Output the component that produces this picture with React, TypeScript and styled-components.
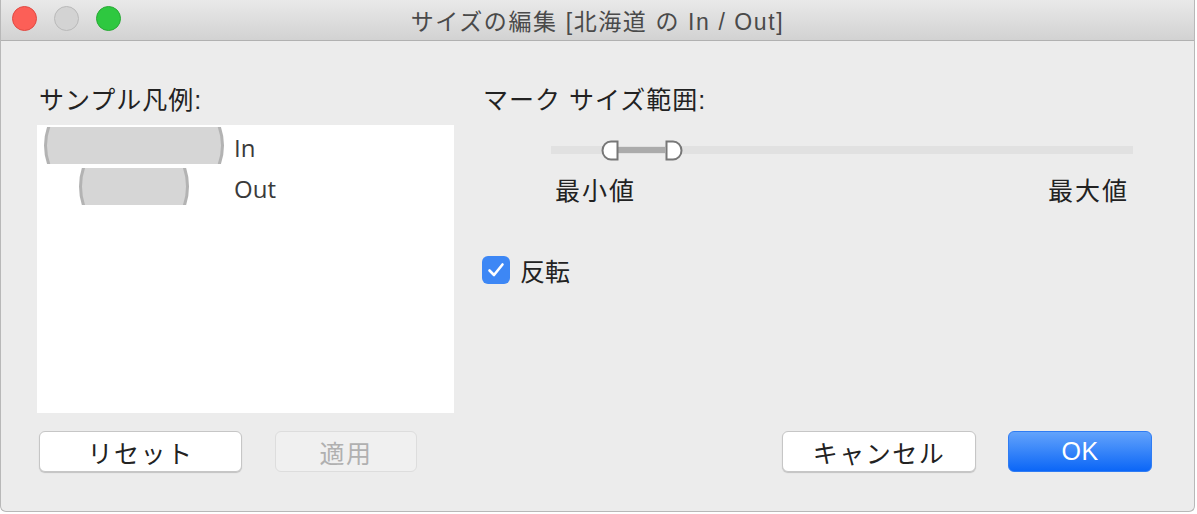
import React from "react";
import styled, { createGlobalStyle, css } from "styled-components";

const GlobalStyle = createGlobalStyle`
  html, body {
    margin: 0;
    padding: 0;
    background: #ffffff;
  }
  body {
    font-family: "Liberation Sans", "Noto Sans CJK JP", sans-serif;
    color: #222;
  }
`;

const Window = styled.div`
  width: 1195px;
  height: 512px;
  box-sizing: border-box;
  display: flex;
  flex-direction: column;
  background: #ececec;
  border: 1px solid #b8b8b8;
  border-top: none;
  border-radius: 0 0 6px 6px;
  overflow: hidden;
`;

const TitleBar = styled.div`
  position: relative;
  height: 40px;
  flex: none;
  display: flex;
  align-items: center;
  justify-content: center;
  background: linear-gradient(#e9e9e9, #d2d2d2);
  border-bottom: 1px solid #b1b1b1;
`;

const Lights = styled.div`
  position: absolute;
  left: 11px;
  top: 6px;
  display: flex;
  gap: 17px;
`;

const Light = styled.span<{ $fill: string; $edge: string }>`
  width: 25px;
  height: 25px;
  box-sizing: border-box;
  border-radius: 50%;
  background: ${(p) => p.$fill};
  border: 1px solid ${(p) => p.$edge};
`;

const Title = styled.div`
  font-size: 23px;
  color: #4a4a4a;
  letter-spacing: 1.6px;
  margin-left: 0;
`;

const Body = styled.div`
  flex: 1;
  display: flex;
  flex-direction: column;
  padding: 44px 0 0 36px;
`;

const Columns = styled.div`
  display: flex;
`;

const LeftColumn = styled.div`
  width: 417px;
  display: flex;
  flex-direction: column;
`;

const RightColumn = styled.div`
  margin-left: 27px;
  width: 652px;
  display: flex;
  flex-direction: column;
`;

const Label = styled.div`
  font-size: 25px;
  letter-spacing: 1px;
  line-height: 30px;
  height: 30px;
  padding-left: 2px;
  color: #222;
`;

const LegendBox = styled.div`
  margin-top: 10px;
  height: 288px;
  background: #ffffff;
  padding-top: 2px;
  box-sizing: border-box;
  display: flex;
  flex-direction: column;
  gap: 4px;
`;

const LegendRow = styled.div`
  display: flex;
  align-items: center;
  height: 37px;
  padding-left: 7px;
`;

const LegendText = styled.span`
  margin-left: 10px;
  font-family: "Open Sans", "Noto Sans", sans-serif;
  font-size: 24px;
  color: #3a3a3a;
  padding-top: 4px;
`;

const SliderArea = styled.div`
  margin: 23px 0 0 70px;
  width: 582px;
  display: flex;
  flex-direction: column;
`;

const Track = styled.div`
  position: relative;
  height: 24px;
  display: flex;
  align-items: center;
  &::before {
    content: "";
    flex: 1;
    height: 8px;
    background: #e1e1e1;
  }
`;

const Range = styled.div`
  position: absolute;
  left: 64px;
  width: 50px;
  top: 9px;
  height: 6px;
  background: #ababab;
`;

const Knob = styled.svg<{ $left: number }>`
  position: absolute;
  top: 2px;
  left: ${(p) => p.$left}px;
`;

const Ends = styled.div`
  margin-top: 14px;
  display: flex;
  justify-content: space-between;
  padding: 0 4px 0 4px;
  font-size: 25px;
  letter-spacing: 2px;
  line-height: 30px;
`;

const CheckRow = styled.label`
  margin-top: 46px;
  display: flex;
  align-items: center;
  gap: 10px;
  font-size: 25px;
  padding-left: 1px;
`;

const CheckBox = styled.span`
  width: 28px;
  height: 28px;
  border-radius: 6px;
  background: #3d87f5;
  display: flex;
  align-items: center;
  justify-content: center;
`;

const Footer = styled.div`
  margin-top: 18px;
  display: flex;
  align-items: center;
  padding-left: 2px;
`;

const Button = styled.button<{ $kind?: "default" | "primary" | "disabled"; $width: number }>`
  width: ${(p) => p.$width}px;
  height: 41px;
  border-radius: 6px;
  font-family: "Liberation Sans", "Noto Sans CJK JP", sans-serif;
  font-size: 25px;
  letter-spacing: 1.5px;
  padding: 0;
  display: flex;
  align-items: center;
  justify-content: center;
  ${(p) =>
    p.$kind === "primary"
      ? css`
          background: linear-gradient(#63a3fb, #0b66f7);
          border: 1px solid #2f7cf3;
          color: #fff;
          letter-spacing: 0.5px;
        `
      : p.$kind === "disabled"
      ? css`
          background: #f0f0f0;
          border: 1px solid #dddddd;
          color: #b0b0b0;
        `
      : css`
          background: #ffffff;
          border: 1px solid #c6c6c6;
          color: #222;
          box-shadow: 0 1px 1px rgba(0, 0, 0, 0.18);
        `}
`;

const Spacer = styled.div<{ $w: number }>`
  width: ${(p) => p.$w}px;
  flex: none;
`;

function Swatch({ w, ry }: { w: number; ry: number }) {
  return (
    <svg width={180} height={37} viewBox="0 0 180 37">
      <ellipse
        cx={90}
        cy={18.5}
        rx={w / 2 - 1.5}
        ry={ry}
        fill="#d6d6d6"
        stroke="#b3b3b3"
        strokeWidth={3}
      />
    </svg>
  );
}

function HalfKnob({ left, flip }: { left: number; flip?: boolean }) {
  return (
    <Knob $left={left} width={18} height={21} viewBox="0 0 18 21">
      <path
        d={
          flip
            ? "M1.5 1.5 H8 A8.5 9 0 0 1 8 19.5 H1.5 Z"
            : "M16.5 1.5 H10 A8.5 9 0 0 0 10 19.5 H16.5 Z"
        }
        fill="#fff"
        stroke="#777"
        strokeWidth={2}
      />
    </Knob>
  );
}

export default function App() {
  return (
    <>
      <GlobalStyle />
      <Window>
        <TitleBar>
          <Lights>
            <Light $fill="#fc5f57" $edge="#e14942" />
            <Light $fill="#d3d3d3" $edge="#b9b9b9" />
            <Light $fill="#2ec840" $edge="#28a935" />
          </Lights>
          <Title>サイズの編集 [北海道 の In / Out]</Title>
        </TitleBar>
        <Body>
          <Columns>
            <LeftColumn>
              <Label>サンプル凡例:</Label>
              <LegendBox>
                <LegendRow>
                  <Swatch w={180} ry={70} />
                  <LegendText>In</LegendText>
                </LegendRow>
                <LegendRow>
                  <Swatch w={110} ry={55} />
                  <LegendText>Out</LegendText>
                </LegendRow>
              </LegendBox>
            </LeftColumn>
            <RightColumn>
              <Label>マーク サイズ範囲:</Label>
              <SliderArea>
                <Track>
                  <Range />
                  <HalfKnob left={50} />
                  <HalfKnob left={114} flip />
                </Track>
                <Ends>
                  <span>最小値</span>
                  <span>最大値</span>
                </Ends>
              </SliderArea>
              <CheckRow>
                <CheckBox>
                  <svg width={18} height={16} viewBox="0 0 18 16">
                    <path
                      d="M2.5 8.5 L7 13 L15.5 2.5"
                      fill="none"
                      stroke="#fff"
                      strokeWidth={2.6}
                      strokeLinecap="round"
                      strokeLinejoin="round"
                    />
                  </svg>
                </CheckBox>
                反転
              </CheckRow>
            </RightColumn>
          </Columns>
          <Footer>
            <Button $width={203}>リセット</Button>
            <Spacer $w={33} />
            <Button $width={142} $kind="disabled">
              適用
            </Button>
            <Spacer $w={365} />
            <Button $width={194}>キャンセル</Button>
            <Spacer $w={32} />
            <Button $width={144} $kind="primary">
              OK
            </Button>
          </Footer>
        </Body>
      </Window>
    </>
  );
}
